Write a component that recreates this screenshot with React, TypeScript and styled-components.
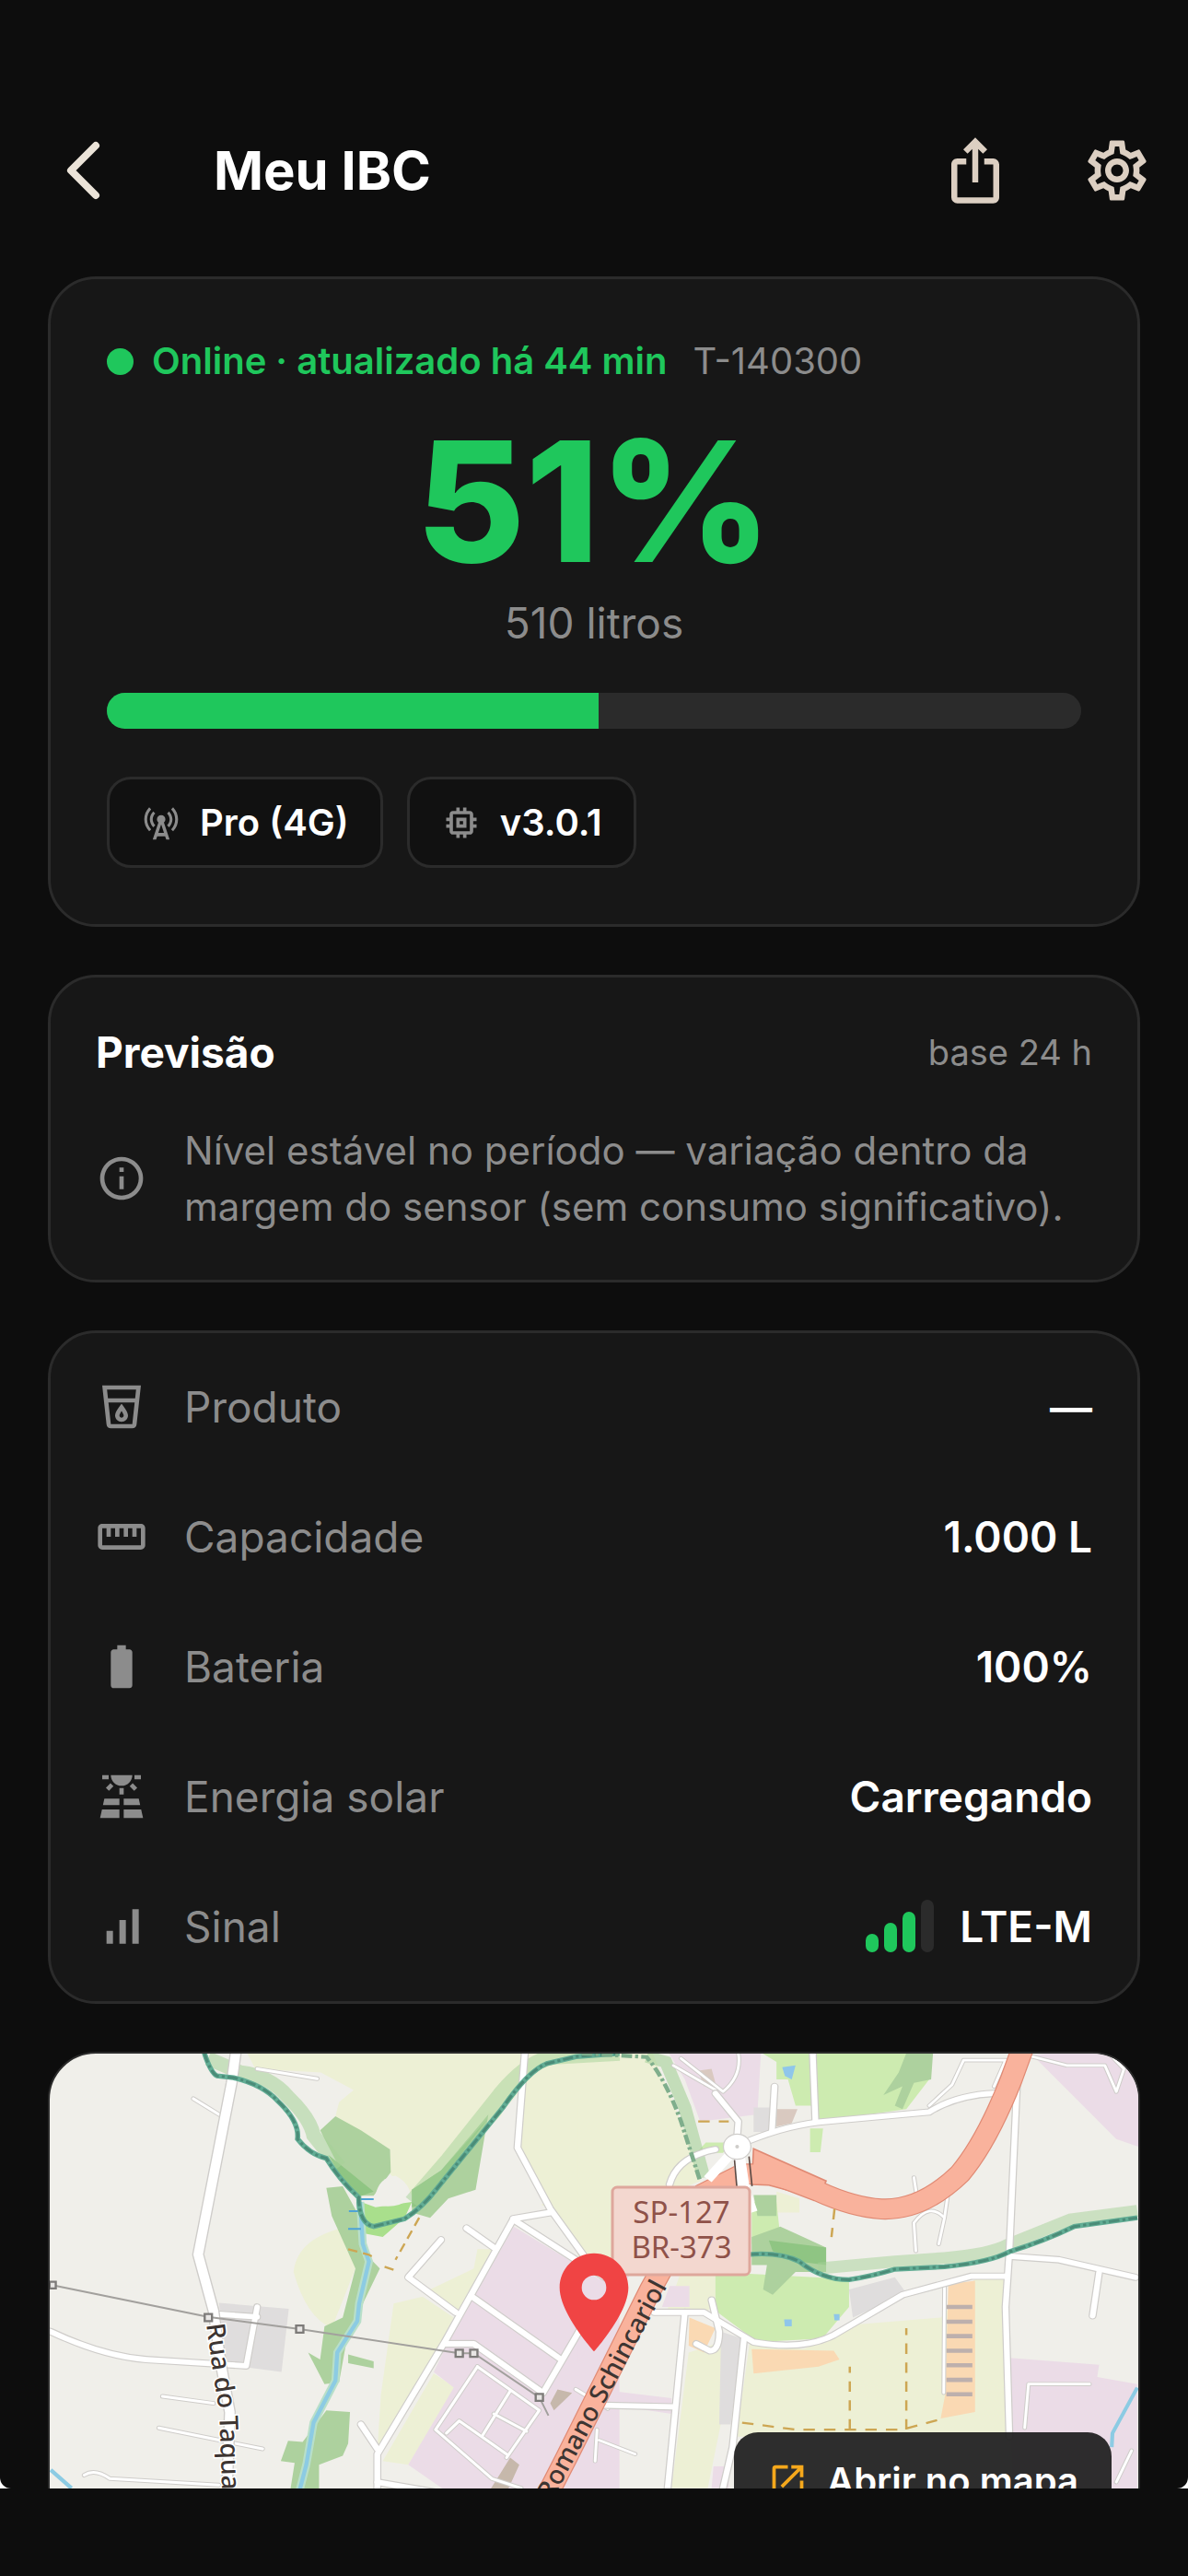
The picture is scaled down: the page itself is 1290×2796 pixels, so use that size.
import React from 'react';
import styled, { createGlobalStyle } from 'styled-components';
import type { IconType } from 'react-icons';
import {
  MdBatteryFull,
  MdCellTower,
  MdInfoOutline,
  MdIosShare,
  MdLocationOn,
  MdMemory,
  MdOpenInNew,
  MdOutlineLocalDrink,
  MdOutlineSettings,
  MdOutlineStraighten,
  MdSignalCellularAlt,
  MdSolarPower,
} from 'react-icons/md';

const color = {
  bg: '#0d0d0d',
  card: '#171717',
  chip: '#111111',
  line: '#2b2b2b',
  green: '#1fc75c',
  muted: '#8c8c8c',
  text: '#ffffff',
  sand: '#dccfc2',
  amber: '#f5a81c',
  pin: '#f04444',
};

const GlobalStyle = createGlobalStyle`
  * { box-sizing: border-box; }
  body {
    margin: 0;
    background: ${color.bg};
    color: ${color.text};
    font-family: Inter, "Noto Sans", sans-serif;
  }
  h1, h2, p, dl, dd, dt { margin: 0; font-weight: inherit; }
  svg { display: block; flex: none; }
`;

const Page = styled.div`
  display: flex;
  flex-direction: column;
  height: 100vh;
  background: ${color.text};
`;

const Screen = styled.div`
  flex: 1;
  min-height: 0;
  overflow: hidden;
  background: ${color.bg};
  border-radius: 0 0 12px 12px;
`;

const BottomInset = styled.div`
  flex: none;
  height: 95px;
  background: ${color.bg};
`;

const Header = styled.header`
  display: flex;
  align-items: center;
  padding-top: 108px;
`;

const IconButton = styled.button<{ $width: number }>`
  display: flex;
  align-items: center;
  justify-content: center;
  width: ${(p) => p.$width}px;
  height: 154px;
  padding: 0;
  border: 0;
  background: none;
  color: ${color.sand};
`;

const Title = styled.h1`
  flex: 1;
  padding-left: 52px;
  font-size: 58px;
  line-height: 64px;
  font-weight: 700;
`;

const Content = styled.main`
  display: flex;
  flex-direction: column;
  gap: 52px;
  padding: 38px 52px 52px;
`;

const Card = styled.section<{ $pad: string }>`
  padding: ${(p) => p.$pad};
  border: 3px solid ${color.line};
  border-radius: 52px;
  background: ${color.card};
`;

const Status = styled.div`
  display: flex;
  align-items: center;
  font-size: 40px;
  line-height: 56px;
`;

const Dot = styled.span`
  width: 29px;
  height: 29px;
  margin-right: 20px;
  border-radius: 50%;
  background: ${color.green};
`;

const Online = styled.span`
  margin-right: 28px;
  font-weight: 600;
  color: ${color.green};
`;

const Muted = styled.span`
  color: ${color.muted};
`;

const Level = styled.p`
  margin-top: 36px;
  font-size: 182px;
  line-height: 176px;
  font-weight: 800;
  text-align: center;
  color: ${color.green};
`;

const Litres = styled.p`
  margin-top: 16px;
  font-size: 46px;
  line-height: 56px;
  text-align: center;
  color: ${color.muted};
`;

const Track = styled.div`
  height: 39px;
  margin-top: 48px;
  overflow: hidden;
  border-radius: 20px;
  background: ${color.line};
`;

const Fill = styled.div`
  height: 100%;
  background: ${color.green};
`;

const Chips = styled.div`
  display: flex;
  gap: 26px;
  margin-top: 52px;
`;

const Chip = styled.div`
  display: flex;
  align-items: center;
  gap: 20px;
  height: 99px;
  padding: 0 34px;
  border: 3px solid ${color.line};
  border-radius: 26px;
  background: ${color.chip};
  font-size: 40px;
  font-weight: 600;

  svg { color: ${color.muted}; }
`;

const ForecastHead = styled.div`
  display: flex;
  align-items: center;
  justify-content: space-between;
  font-size: 38px;
  line-height: 64px;
`;

const Heading = styled.h2`
  font-size: 46px;
  font-weight: 700;
`;

const Notice = styled.div`
  display: flex;
  align-items: center;
  gap: 40px;
  margin-top: 44px;
  font-size: 42px;
  line-height: 61px;
  color: ${color.muted};
`;

const Row = styled.div`
  display: flex;
  align-items: center;
  height: 141px;
  font-size: 46px;
`;

const Label = styled.dt`
  display: flex;
  flex: 1;
  align-items: center;
  gap: 40px;
  color: ${color.muted};
`;

const Value = styled.dd`
  display: flex;
  align-items: center;
  gap: 28px;
  font-weight: 600;
`;

const Bars = styled.span`
  display: flex;
  align-items: flex-end;
  gap: 6px;
`;

const Bar = styled.span<{ $height: number; $on: boolean }>`
  width: 14px;
  height: ${(p) => p.$height}px;
  border-radius: 7px;
  background: ${(p) => (p.$on ? color.green : color.line)};
`;

const MapCard = styled.section`
  position: relative;
  height: 546px;
  overflow: hidden;
  border: 2px solid ${color.line};
  border-radius: 52px;
  background: #f0efea;
`;

const MapArt = styled.svg`
  width: 100%;
  height: 100%;
`;

const Pin = styled.div`
  position: absolute;
  top: 206px;
  left: 50%;
  margin-left: -64px;
  color: ${color.pin};
`;

const MapButton = styled.button`
  position: absolute;
  right: 29px;
  bottom: 27px;
  display: flex;
  align-items: center;
  gap: 20px;
  height: 104px;
  padding: 0 36px;
  border: 0;
  border-radius: 26px;
  background: rgba(30, 30, 30, 0.93);
  color: ${color.text};
  font: 600 40px Inter, "Noto Sans", sans-serif;

  svg { color: ${color.amber}; }
`;

/* West half of the map: river, farm road and the industrial estate. */
const WEST = 'translate(-14 -29) scale(0.3954 0.3801)';
/* East half: roundabout, motorway bend and fields. */
const EAST = 'translate(586 -29) scale(0.4146 0.3801)';

const RIVER_WEST =
  'M460 75Q478 132 495 140L540 145Q620 165 660 210Q722 270 716 320Q750 365 795 375Q830 435 884 487Q885 562 925 570L1010 548Q1060 515 1100 460L1280 230Q1350 125 1400 105L1480 85L1600 76';
const RIVER_EAST =
  'M415 650Q500 642 550 670Q610 722 680 722Q740 712 800 692L930 685Q1050 672 1100 642Q1190 612 1270 570L1435 545';
const MOTORWAY =
  'M1135 60L1105 150Q1040 330 970 420Q870 525 765 520Q690 515 600 470L480 420L400 420L300 475L160 750L-60 1230L-140 1400';

const estateRoads = [
  'M935 1317V1220L1120 900L1308 550L1480 665L1568 720',
  'M1195 770L1440 950',
  'M1120 905H1200L1390 1045L1500 850',
  'M1308 548L1410 530',
  'M1340 75L1320 345L1410 520L1500 650',
  'M1180 575L1255 630',
  'M1150 815L1020 715L1110 608',
  'M935 1300L1100 1330',
  'M935 1205L890 1135',
];

const laneRoads = [
  'M1210 970L1095 1150L1250 1290L1330 1317',
  'M1210 970L1380 1095L1290 1230',
  'M1300 1040L1225 1165',
  'M1255 1105L1345 1155',
  'M1125 1160L1160 1125L1290 1220',
  'M430 205L500 250',
  'M345 1055L485 1075',
  'M335 1145L620 1205',
  'M130 1280Q160 1260 200 1290L500 1308',
  'M605 120L770 148',
  'M1480 1035L1568 1090',
];

const eastRoads = [
  'M385 340Q500 285 600 272L890 243Q960 195 1060 190',
  'M585 75L592 270',
  'M485 170L478 300',
  'M1120 160L1100 640L1090 800L1100 1170',
  'M1100 655L1230 665L1430 715',
  'M1335 700L1318 825',
  'M1090 712H1000L820 765L640 880Q560 925 430 900L300 815L170 815',
  'M250 815L205 1317',
  'M405 890L375 1200L350 1317',
  'M320 780L340 870Q340 925 315 925L280 905',
  'M210 450Q230 370 330 350',
  'M385 340L390 270L330 190',
  'M20 1080L220 1085',
];

const eastLanes = [
  'M390 75Q400 140 350 185L240 90',
  'M330 180L220 110',
  'M890 225L950 165L980 95H1090L1060 170',
  'M930 740L928 1045',
  'M1140 1145L1150 1020H1310',
  'M855 640L850 560Q890 500 930 545L915 620',
  'M850 430L860 500',
  'M940 470L930 545',
  'M1160 85L1250 110H1350L1380 185L1400 120L1360 75',
  'M25 1180L120 1220',
  'M1420 1210L1380 1300',
  'M20 1150L15 1240',
];

function Roads({ paths, width, edge = 6 }: { paths: string[]; width: number; edge?: number }) {
  return (
    <g fill="none" strokeLinejoin="round" strokeLinecap="round">
      {paths.map((d) => <path key={d} d={d} stroke="#cfcdca" strokeWidth={width + edge} />)}
      {paths.map((d) => <path key={d} d={d} stroke="#ffffff" strokeWidth={width} />)}
    </g>
  );
}

function StreetMap() {
  return (
    <MapArt viewBox="0 0 1182 542" preserveAspectRatio="xMidYMin slice" role="img" aria-label="Mapa">
      <g transform={WEST}>
        <path fill="#edf0d5" d="M570 60H1600V760L1500 650L1410 520L1330 480L1335 380L1290 240L1030 480L970 420V350L820 255L830 215L870 180L780 130L600 120Z" />
        <path fill="#f0efea" d="M1280 240L1330 180L1318 345L1400 500L1320 540L1140 570L1200 470Z" />
        <path fill="#edf0d5" d="M855 570Q715 600 705 700Q740 830 810 860L890 650Z" />
        <path fill="#edf0d5" d="M1210 635H1255L1160 810L1080 750L1200 690ZM980 790L1060 770L1145 830L1090 940L935 1210L945 1050ZM1090 990L1150 1030L1020 1250L950 1240Z" />
        <path fill="#ebdce7" d="M1310 570L1500 690L1600 760V1400L1130 1330L1020 1250L1145 1030L1090 985L1130 900Z" />
        <path fill="#dfdddd" d="M500 788L692 805L672 985L520 965Z" />
        <path fill="#add19e" d="M778 295L820 255L890 295L970 350L972 415L925 482H885L830 400ZM1030 465L1110 410L1240 250L1205 465L1130 490L1080 545L1030 530ZM795 460L840 455L885 540L895 640L942 690L900 780L850 900L830 1015L790 1020L745 930L778 950L790 855L840 830L875 690L810 540ZM855 935L925 955V975L855 960ZM795 1095L860 1100L855 1190L840 1225L775 1250V1330H695L708 1245L670 1240L690 1182L730 1185Z" />
        <path fill="#8fc583" d="M800 365L925 470L885 485L830 420ZM1030 465L1110 410L1240 260L1060 510L1030 515Z" />
        <path fill="#a9df8c" d="M890 500L930 515L1030 500L1010 545L950 600L900 590Z" />
        <path fill="#f0efea" d="M930 480Q940 430 985 425Q1030 450 1025 490Q990 520 940 510Z" />
        <path fill="#c6b8ab" d="M1300 1230L1325 1250L1290 1330H1240ZM1430 1035L1470 1045L1420 1095L1410 1075Z" />
      </g>
      <g transform={EAST}>
        <path fill="#edf0d5" d="M-30 60H160L240 270L290 440L200 480L60 700H-30ZM240 700H330V790L300 820H200ZM260 930L345 900V1130L310 1317H215ZM420 900L560 920L700 850L920 830L1010 720H1085L1095 1170H385ZM490 470L550 490V530H490Z" />
        <path fill="#ebdce7" d="M200 60H450L440 250L290 270L250 150ZM1160 80L1350 60L1445 100V345L1380 320ZM1100 945L1335 965L1330 1000L1435 1020V1400H1110ZM210 740H262V800H190ZM60 1040L215 1060V1105L60 1080ZM325 1255H365V1317H320ZM40 700H110L-30 960L-30 800Z" />
        <path fill="#cdebb0" d="M430 60H900L890 150L830 235L600 270L580 225H540L520 150H490V100ZM578 290H612L605 358H578ZM425 500H490L500 600L425 620ZM330 700L680 720V800L610 890L440 900L330 810ZM305 330H370L350 360H280Z" />
        <path fill="#add19e" d="M830 75H900L895 150L850 160L820 235L800 225L820 170L770 195L810 130ZM430 480H490V540H440ZM425 600L500 570L540 590L620 630V700L540 700L480 765L455 750L465 680H425Z" />
        <path fill="#8fc583" d="M470 610L620 630V680L550 670L480 640Z" />
        <path fill="#fad9b3" d="M425 920L640 925L655 950L600 970L430 990ZM940 735L1010 725V1100L920 1118L932 1050ZM262 830L330 860L300 930L260 910Z" />
        <path fill="#dfdddd" d="M345 870L400 890L370 1135H340ZM680 750L800 715L830 760L690 830ZM430 230H485V300H430Z" />
        <path fill="#d9c9c0" d="M490 235H545L530 275L490 285ZM285 125L320 120L330 160L300 170Z" />
        <path fill="#8fc6ea" d="M505 115L540 110L530 150L512 140ZM510 835H530V855H512ZM640 820H655V838H642Z" />
        <path d="M935 800H1003M935 842H1003M935 883H1003M935 925H1003M935 966H1003M935 1008H1003M935 1049H1003" stroke="#bdb0ad" strokeWidth="12" />
      </g>

      <g transform={WEST} fill="none">
        <path d="M470 90L560 130Q640 140 690 200Q750 260 760 310L830 400" stroke="#a5d197" strokeOpacity="0.55" strokeWidth="40" />
        <path d="M1030 500L1130 380L1260 210Q1340 100 1420 85L1600 75" stroke="#a5d197" strokeOpacity="0.5" strokeWidth="44" />
        <path d="M888 500L895 620L912 670L885 790L880 840L825 930L820 1010L760 1130L740 1250L720 1330" stroke="#b8dfc9" strokeWidth="22" />
        <path d="M888 500L895 620L912 670L885 790L880 840L825 930L820 1010L760 1130L740 1250L720 1330M38 1265L95 1317" stroke="#8ccbe3" strokeWidth="11" />
        <path d="M888 492H925M857 526H885M855 577H890" stroke="#4fa3d6" strokeWidth="5" />
      </g>
      <g transform={EAST} fill="none">
        <path d="M150 85L200 100L250 230L300 430" stroke="#a5d197" strokeOpacity="0.6" strokeWidth="34" />
        <path d="M600 690L800 670L930 660Q1050 650 1100 620L1260 550L1435 525" stroke="#a5d197" strokeOpacity="0.5" strokeWidth="34" />
        <path d="M1435 1030L1370 1160L1368 1200" stroke="#8ccbe3" strokeWidth="10" />
      </g>

      <g transform={WEST}>
        <Roads paths={laneRoads} width={8} edge={5} />
        <Roads paths={['M38 870Q180 940 300 950L575 968L605 800', 'M490 820L605 828']} width={15} />
        <Roads paths={estateRoads} width={16} />
        <Roads paths={['M548 60L535 160L490 400L443 650L485 810L505 960L530 1100L522 1330']} width={26} edge={7} />
      </g>
      <g transform={EAST}>
        <Roads paths={eastLanes} width={7} edge={5} />
        <Roads paths={eastRoads} width={15} />
      </g>

      <g transform={WEST} fill="none">
        <path d={RIVER_WEST} stroke="#62ad95" strokeWidth="14" />
        <path d={RIVER_WEST} stroke="#4b8c78" strokeWidth="8" strokeDasharray="28 8 8 8" />
      </g>
      <g transform={EAST} fill="none">
        <path d="M-20 76L150 86Q200 150 240 270L290 440" stroke="#7fae8c" strokeWidth="11" strokeDasharray="28 8 8 8" />
        <path d={RIVER_EAST} stroke="#62ad95" strokeWidth="14" />
        <path d={RIVER_EAST} stroke="#4b8c78" strokeWidth="8" strokeDasharray="28 8 8 8" />
        <path d={MOTORWAY} stroke="#e08a74" strokeWidth="60" />
        <path d="M430 348L620 440L600 490L470 452L425 450Z" fill="#f9b29c" stroke="#e08a74" strokeWidth="4" />
        <path d={MOTORWAY} stroke="#f9b29c" strokeWidth="54" />
        <path d="M285 270H365M642 520L634 600M682 1150V970M830 1150V860M400 1130L540 1150H820L920 1120" stroke="#cda653" strokeWidth="6" strokeDasharray="30 24" />
        <path d="M385 345L310 435" stroke="#ffffff" strokeWidth="26" />
        <path d="M388 345L405 470L425 530" stroke="#ffffff" strokeWidth="32" />
        <circle cx="387" cy="342" r="36" fill="#ffffff" stroke="#cfcdca" strokeWidth="3" />
        <circle cx="387" cy="342" r="5" fill="#cfcdca" />
        <path d="M380 380L386 455M418 370L426 455" stroke="#5d4b45" strokeWidth="4" />
      </g>

      <g transform={WEST} fill="none">
        <path d="M45 738L470 828L722 863L1160 932H1200L1380 1058L1405 1110" stroke="#a2a09d" strokeWidth="5" />
        <path d="M1050 545L985 665M855 635L910 650L930 660M955 685L990 697" stroke="#cda653" strokeWidth="6" strokeDasharray="26 16" />
        <path
          d="M35 728H52V747H35ZM461 820H481V840H461ZM712 853H732V873H712ZM1150 922H1170V942H1150ZM1190 922H1210V942H1190ZM1370 1048H1390V1068H1370Z"
          fill="#e8e6e4"
          stroke="#7d7b79"
          strokeWidth="6"
        />
      </g>

      <defs>
        <path id="rua" d="M170 294L175 330L184 390L187 470L187 600" />
        <path id="romano" d="M545 486L700 198" />
      </defs>
      <g fontFamily="'Noto Sans', sans-serif" fontWeight="500" fontSize="28" fill="#3d3532">
        <text stroke="#ffffff" strokeWidth="3" paintOrder="stroke">
          <textPath href="#rua">Rua do Taquaral</textPath>
        </text>
        <text>
          <textPath href="#romano">Romano Schincariol</textPath>
        </text>
      </g>
      <rect x="611" y="145" width="149" height="95" rx="5" fill="#f3d7cf" stroke="#dea79c" strokeWidth="3" />
      <text fontFamily="'Noto Sans', sans-serif" fontSize="33" fill="#8f5249" textAnchor="middle">
        <tspan x="686" y="184">SP-127</tspan>
        <tspan x="686" y="222">BR-373</tspan>
      </text>
    </MapArt>
  );
}

type Detail = { icon: IconType; label: string; value: string; bars?: number };

const details: Detail[] = [
  { icon: MdOutlineLocalDrink, label: 'Produto', value: '—' },
  { icon: MdOutlineStraighten, label: 'Capacidade', value: '1.000 L' },
  { icon: MdBatteryFull, label: 'Bateria', value: '100%' },
  { icon: MdSolarPower, label: 'Energia solar', value: 'Carregando' },
  { icon: MdSignalCellularAlt, label: 'Sinal', value: 'LTE-M', bars: 3 },
];

const barHeights = [20, 32, 44, 57];
const fillPercent = 50.5;

export default function App() {
  return (
    <Page>
      <GlobalStyle />
      <Screen>
        <Header>
          <IconButton $width={180} type="button" aria-label="Voltar">
            <svg width="40" height="66" viewBox="0 0 40 66" fill="none" stroke="#ebe3d8" strokeWidth="8" strokeLinecap="round" strokeLinejoin="round">
              <path d="M34 6L7 33L34 60" />
            </svg>
          </IconButton>
          <Title>Meu IBC</Title>
          <IconButton $width={154} type="button" aria-label="Compartilhar">
            <MdIosShare size={78} />
          </IconButton>
          <IconButton $width={154} type="button" aria-label="Configurações">
            <MdOutlineSettings size={78} />
          </IconButton>
        </Header>

        <Content>
          <Card $pad="61px">
            <Status>
              <Dot />
              <Online>Online · atualizado há 44 min</Online>
              <Muted>T-140300</Muted>
            </Status>
            <Level>51%</Level>
            <Litres>510 litros</Litres>
            <Track role="progressbar" aria-label="Nível" aria-valuenow={51} aria-valuemin={0} aria-valuemax={100}>
              <Fill style={{ width: `${fillPercent}%` }} />
            </Track>
            <Chips>
              <Chip><MdCellTower size={44} />Pro (4G)</Chip>
              <Chip><MdMemory size={44} />v3.0.1</Chip>
            </Chips>
          </Card>

          <Card $pad="49px">
            <ForecastHead>
              <Heading>Previsão</Heading>
              <Muted>base 24 h</Muted>
            </ForecastHead>
            <Notice>
              <MdInfoOutline size={56} />
              <p>Nível estável no período — variação dentro da margem do sensor (sem consumo significativo).</p>
            </Notice>
          </Card>

          <Card $pad="9px 49px 11px">
            <dl>
              {details.map(({ icon: Icon, label, value, bars }) => (
                <Row key={label}>
                  <Label><Icon size={56} />{label}</Label>
                  <Value>
                    {bars !== undefined && (
                      <Bars>
                        {barHeights.map((h, i) => <Bar key={h} $height={h} $on={i < bars} />)}
                      </Bars>
                    )}
                    {value}
                  </Value>
                </Row>
              ))}
            </dl>
          </Card>

          <MapCard>
            <StreetMap />
            <Pin><MdLocationOn size={128} /></Pin>
            <MapButton type="button"><MdOpenInNew size={45} />Abrir no mapa</MapButton>
          </MapCard>
        </Content>
      </Screen>
      <BottomInset />
    </Page>
  );
}
